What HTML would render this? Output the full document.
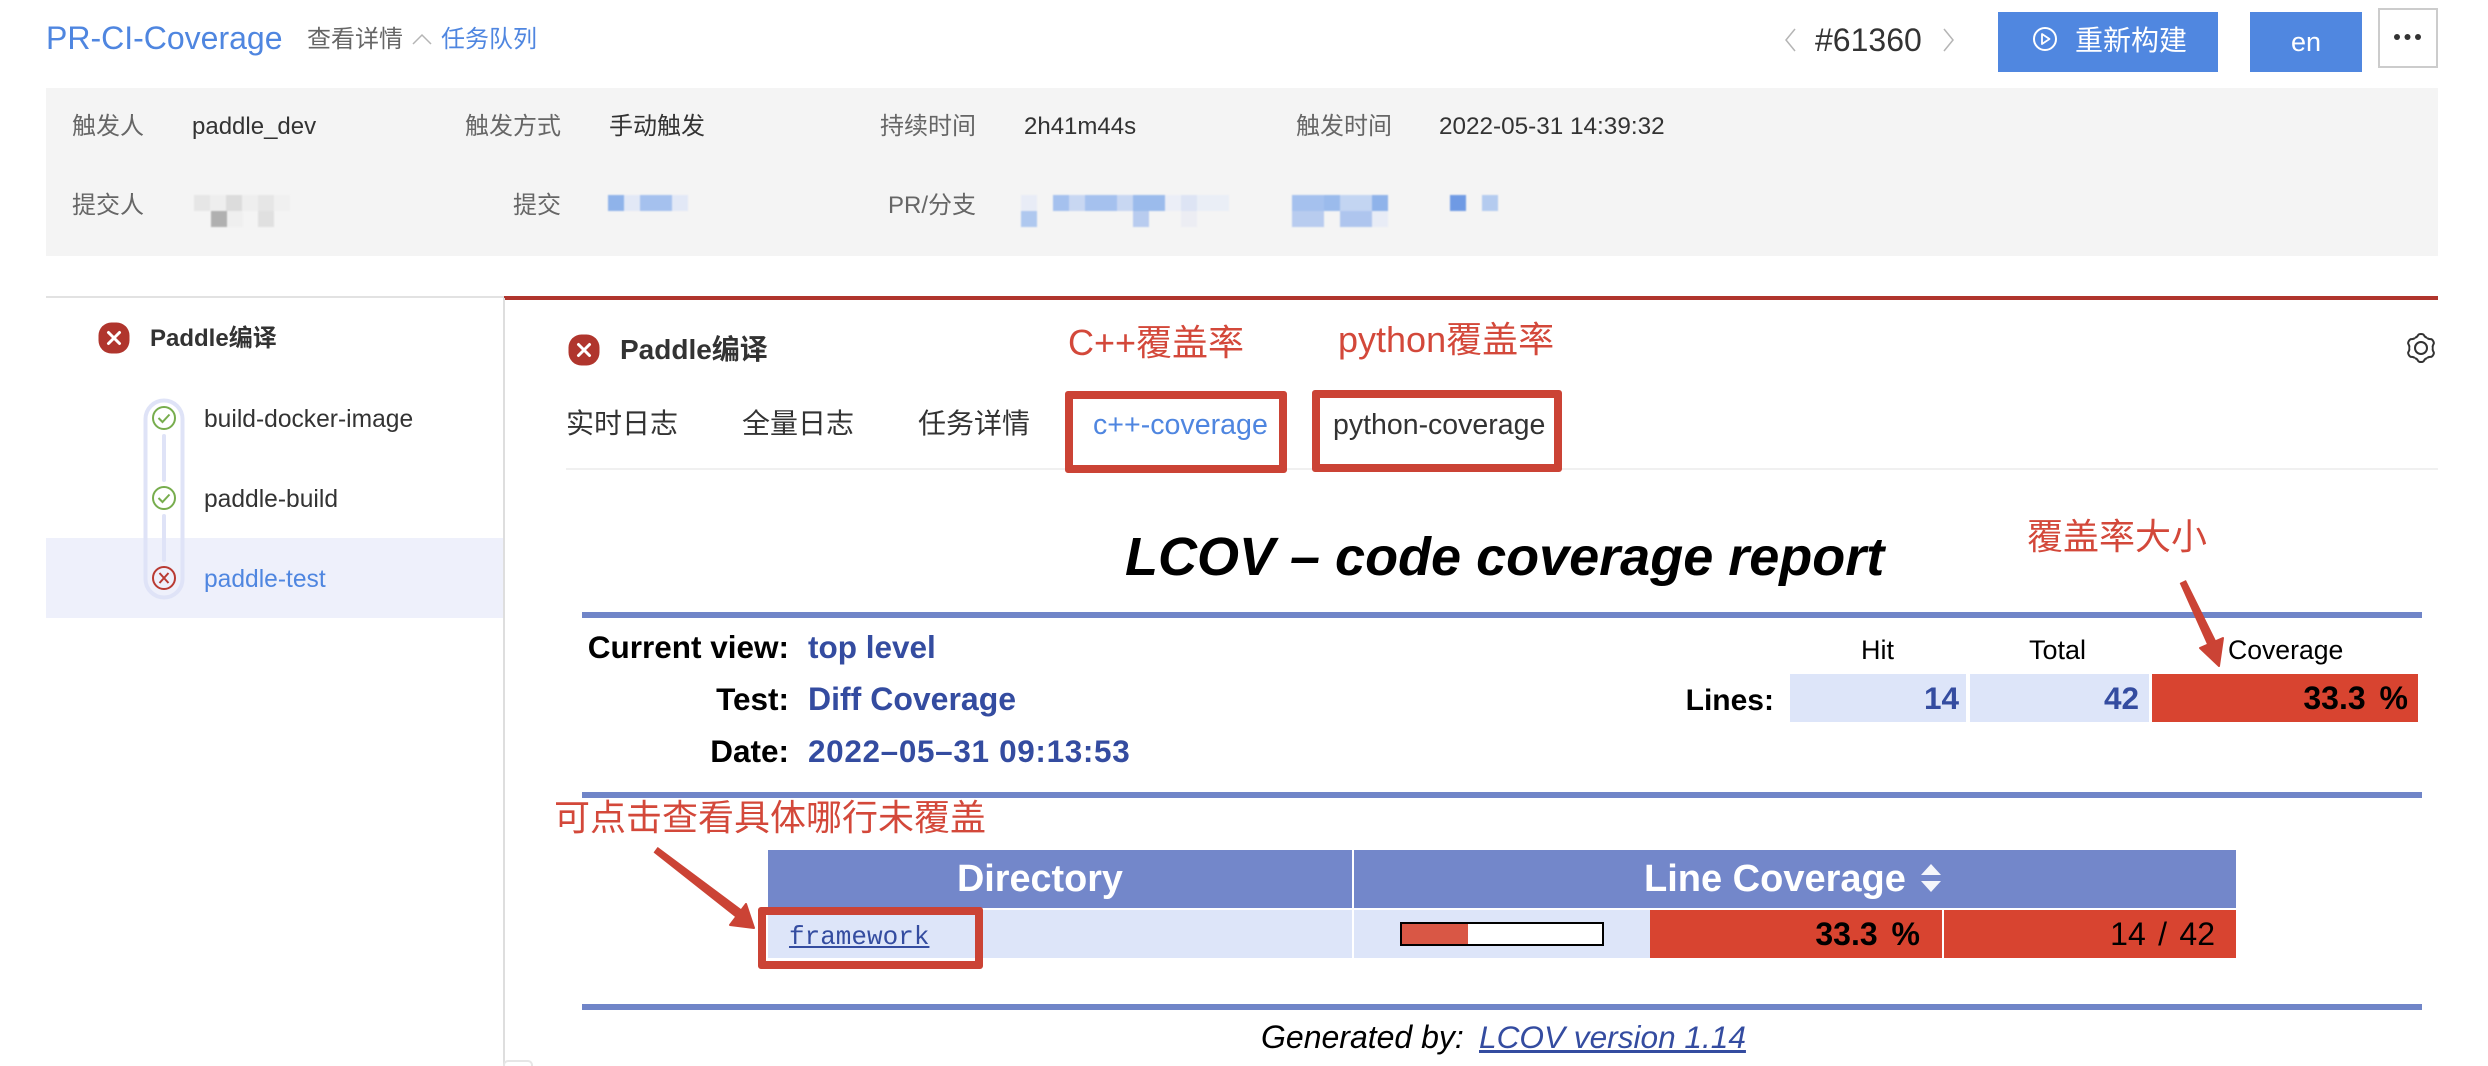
<!DOCTYPE html>
<html lang="zh"><head><meta charset="utf-8"><title>PR-CI-Coverage</title>
<style>
html,body{margin:0;padding:0;background:#fff}
#p{position:relative;width:2488px;height:1066px;overflow:hidden;background:#fff;font-family:"Liberation Sans","Noto Sans CJK SC",sans-serif;color:#333}
.t{position:absolute;white-space:nowrap;line-height:40px;height:40px}
.r{position:absolute}
.g{color:#666;font-size:24px}
.d{color:#333;font-size:24px}
.a{color:#d3483a;font-size:36px;line-height:50px;height:50px}
.b{font-weight:bold;color:#000;font-size:31.5px;line-height:44px;height:44px}
.v{font-weight:bold;color:#344ca0;font-size:31.5px;line-height:44px;height:44px}
.box{position:absolute;border:8px solid #cb4335;border-radius:3px;box-sizing:border-box}
</style></head><body><div id="p">
<div class="t" style="left:46px;top:18px;font-size:32px;color:#4f86e0">PR-CI-Coverage</div>
<div class="t" style="left:307px;top:20px;font-size:24px;color:#666">查看详情</div>
<svg class="r" style="left:411px;top:32px" width="22" height="14"><path d="M2 12 L11 3 L20 12" fill="none" stroke="#b5b5b5" stroke-width="1.5"/></svg>
<div class="t" style="left:441px;top:20px;font-size:24px;color:#4f86e0">任务队列</div>
<svg class="r" style="left:1783px;top:27px" width="14" height="26"><path d="M12 2 L3 13 L12 24" fill="none" stroke="#b5b5b5" stroke-width="1.5"/></svg>
<div class="t" style="left:1815px;top:20px;font-size:32px;color:#333">#61360</div>
<svg class="r" style="left:1942px;top:27px" width="14" height="26"><path d="M2 2 L11 13 L2 24" fill="none" stroke="#b5b5b5" stroke-width="1.5"/></svg>
<div class="r" style="left:1998px;top:12px;width:220px;height:60px;background:#5087e0"></div>
<svg class="r" style="left:2032px;top:26px" width="26" height="26"><circle cx="13" cy="13" r="11" fill="none" stroke="#fff" stroke-width="2"/><path d="M10 8 L17.5 13 L10 18 Z" fill="none" stroke="#fff" stroke-width="1.8" stroke-linejoin="round"/></svg>
<div class="t" style="left:2075px;top:21px;font-size:28px;color:#fff">重新构建</div>
<div class="r" style="left:2250px;top:12px;width:112px;height:60px;background:#5087e0"></div>
<div class="t" style="left:2250px;width:112px;text-align:center;top:22px;font-size:27px;color:#fff">en</div>
<div class="r" style="left:2378px;top:8px;width:60px;height:60px;box-sizing:border-box;border:2px solid #ccc;background:#fff"></div>
<svg class="r" style="left:2390px;top:30px" width="36" height="14" fill="#333"><circle cx="7" cy="7" r="3"/><circle cx="17.5" cy="7" r="3"/><circle cx="28" cy="7" r="3"/></svg>

<div class="r" style="left:46px;top:88px;width:2392px;height:168px;background:#f4f4f4"></div>
<div class="t g" style="left:72px;top:107px">触发人</div>
<div class="t d" style="left:192px;top:107px">paddle_dev</div>
<div class="t g" style="left:465px;top:107px">触发方式</div>
<div class="t d" style="left:609px;top:107px">手动触发</div>
<div class="t g" style="left:880px;top:107px">持续时间</div>
<div class="t d" style="left:1024px;top:107px">2h41m44s</div>
<div class="t g" style="left:1296px;top:107px">触发时间</div>
<div class="t d" style="left:1439px;top:107px;font-size:24.3px">2022-05-31 14:39:32</div>
<div class="t g" style="left:72px;top:186px">提交人</div>
<div class="t g" style="left:513px;top:186px">提交</div>
<div class="t g" style="left:888px;top:186px">PR/分支</div>
<svg class="r" style="left:0;top:190px;filter:blur(.8px)" width="1520" height="45">
<g transform="translate(0,5)">
<rect x="194" y="0" width="16" height="16" fill="#e6e6e6"/><rect x="210" y="0" width="16" height="16" fill="#eeeeee"/><rect x="226" y="0" width="16" height="16" fill="#dcdcdc"/><rect x="242" y="0" width="16" height="16" fill="#eeeeee"/><rect x="258" y="0" width="16" height="16" fill="#e6e6e6"/><rect x="274" y="0" width="16" height="16" fill="#f0f0f0"/>
<rect x="211" y="16" width="16" height="16" fill="#b0b0b0"/><rect x="227" y="16" width="16" height="16" fill="#efefef"/><rect x="258" y="16" width="16" height="16" fill="#e0e0e0"/>
<rect x="608" y="0" width="16" height="16" fill="#8fb3ea"/><rect x="624" y="0" width="16" height="16" fill="#e2e8f6"/><rect x="640" y="0" width="32" height="16" fill="#a5c1ee"/><rect x="672" y="0" width="16" height="16" fill="#e2e8f6"/>
<rect x="1021" y="0" width="16" height="16" fill="#e8ecf6"/><rect x="1053" y="0" width="16" height="16" fill="#a5c1ee"/><rect x="1069" y="0" width="16" height="16" fill="#c8d7f2"/><rect x="1085" y="0" width="32" height="16" fill="#a5c1ee"/><rect x="1117" y="0" width="16" height="16" fill="#c8d7f2"/><rect x="1133" y="0" width="32" height="16" fill="#9bbbec"/><rect x="1165" y="0" width="16" height="16" fill="#ebeef7"/><rect x="1181" y="0" width="16" height="16" fill="#dde4f4"/><rect x="1197" y="0" width="32" height="16" fill="#eaeef6"/>
<rect x="1021" y="16" width="16" height="16" fill="#afc8ef"/><rect x="1133" y="16" width="16" height="16" fill="#b8ccef"/><rect x="1181" y="16" width="16" height="16" fill="#ecedf3"/>
<rect x="1292" y="0" width="32" height="16" fill="#a5c1ee"/><rect x="1324" y="0" width="16" height="16" fill="#9bbbec"/><rect x="1340" y="0" width="32" height="16" fill="#c3d5f2"/><rect x="1372" y="0" width="16" height="16" fill="#8fb3ea"/>
<rect x="1292" y="16" width="32" height="16" fill="#b8ccef"/><rect x="1340" y="16" width="32" height="16" fill="#aec5ee"/><rect x="1372" y="16" width="16" height="16" fill="#e8ecf6"/>
<rect x="1450" y="0" width="16" height="16" fill="#6f9ae4"/><rect x="1482" y="0" width="16" height="16" fill="#b4cbef"/>
</g></svg>

<div class="r" style="left:46px;top:296px;width:458px;height:2px;background:#e2e2e2"></div>
<div class="r" style="left:504px;top:296px;width:1934px;height:4px;background:#b0352d"></div>
<div class="r" style="left:503px;top:298px;width:2px;height:768px;background:#dedede"></div>
<div class="r" style="left:46px;top:538px;width:457px;height:80px;background:#eef0fb"></div>
<svg class="r" style="left:98px;top:322px" width="32" height="32"><rect x="0.5" y="0.5" width="31" height="31" rx="13" fill="#b0352d"/><path d="M10.5 10.5 L21.5 21.5 M21.5 10.5 L10.5 21.5" stroke="#fff" stroke-width="3" stroke-linecap="round"/></svg>
<div class="t" style="left:150px;top:319px;font-size:24px;font-weight:bold;color:#333">Paddle编译</div>
<svg class="r" style="left:140px;top:395px" width="50" height="210">
<rect x="5.5" y="5.5" width="37" height="197" rx="18.5" fill="none" stroke="#dfe3f7" stroke-width="4"/>
<rect x="22" y="39" width="4" height="48" rx="2" fill="#dfe3f7"/><rect x="22" y="119" width="4" height="48" rx="2" fill="#dfe3f7"/>
<circle cx="24" cy="23" r="11" fill="none" stroke="#77ad4d" stroke-width="2"/><path d="M18.5 23 L22.5 27 L29.5 19.5" fill="none" stroke="#77ad4d" stroke-width="2"/>
<circle cx="24" cy="103" r="11" fill="none" stroke="#77ad4d" stroke-width="2"/><path d="M18.5 103 L22.5 107 L29.5 99.5" fill="none" stroke="#77ad4d" stroke-width="2"/>
<circle cx="24" cy="183" r="11" fill="none" stroke="#b93a32" stroke-width="2"/><path d="M19.5 178 L28.5 188 M28.5 178 L19.5 188" fill="none" stroke="#b93a32" stroke-width="2"/>
</svg>
<div class="t" style="left:204px;top:400px;font-size:24.6px;color:#333">build-docker-image</div>
<div class="t" style="left:204px;top:480px;font-size:24.6px;color:#333">paddle-build</div>
<div class="t" style="left:204px;top:560px;font-size:24.6px;color:#4f86e0">paddle-test</div>

<svg class="r" style="left:568px;top:334px" width="32" height="32"><rect x="0.5" y="0.5" width="31" height="31" rx="13" fill="#b0352d"/><path d="M10.5 10.5 L21.5 21.5 M21.5 10.5 L10.5 21.5" stroke="#fff" stroke-width="3" stroke-linecap="round"/></svg>
<div class="t" style="left:620px;top:330px;font-size:28px;font-weight:bold;color:#333">Paddle编译</div>
<svg class="r" style="left:2405px;top:332px" width="32" height="32" viewBox="0 0 32 32"><g fill="none" stroke="#333" stroke-width="2" stroke-linejoin="round"><path d="M10 5.6 C12 5.6 12.6 4 13.2 3 C14 1.6 18 1.6 18.8 3 C19.4 4 20 5.6 22 5.6"/><path transform="rotate(60 16 16)" d="M10 5.6 C12 5.6 12.6 4 13.2 3 C14 1.6 18 1.6 18.8 3 C19.4 4 20 5.6 22 5.6"/><path transform="rotate(120 16 16)" d="M10 5.6 C12 5.6 12.6 4 13.2 3 C14 1.6 18 1.6 18.8 3 C19.4 4 20 5.6 22 5.6"/><path transform="rotate(180 16 16)" d="M10 5.6 C12 5.6 12.6 4 13.2 3 C14 1.6 18 1.6 18.8 3 C19.4 4 20 5.6 22 5.6"/><path transform="rotate(240 16 16)" d="M10 5.6 C12 5.6 12.6 4 13.2 3 C14 1.6 18 1.6 18.8 3 C19.4 4 20 5.6 22 5.6"/><path transform="rotate(300 16 16)" d="M10 5.6 C12 5.6 12.6 4 13.2 3 C14 1.6 18 1.6 18.8 3 C19.4 4 20 5.6 22 5.6"/><circle cx="16" cy="16" r="6"/></g></svg>

<div class="t" style="left:566px;top:404px;font-size:28px;color:#333">实时日志</div>
<div class="t" style="left:742px;top:404px;font-size:28px;color:#333">全量日志</div>
<div class="t" style="left:918px;top:404px;font-size:28px;color:#333">任务详情</div>
<div class="t" style="left:1093px;top:405px;font-size:28.6px;color:#4f86e0">c++-coverage</div>
<div class="t" style="left:1333px;top:405px;font-size:28.5px;color:#333">python-coverage</div>
<div class="r" style="left:566px;top:468px;width:1872px;height:2px;background:#f0f0f0"></div>

<div class="t" style="left:1125px;top:527px;height:60px;line-height:60px;font-size:54px;font-weight:bold;font-style:italic;color:#000">LCOV – code coverage report</div>
<div class="r" style="left:582px;top:612px;width:1840px;height:6px;background:#7085c8"></div>
<div class="r" style="left:582px;top:792px;width:1840px;height:6px;background:#7085c8"></div>
<div class="r" style="left:582px;top:1004px;width:1840px;height:6px;background:#7085c8"></div>

<div class="t b" style="right:1699px;top:625px">Current view:</div>
<div class="t v" style="left:808px;top:625px">top level</div>
<div class="t b" style="right:1699px;top:677px">Test:</div>
<div class="t v" style="left:808px;top:677px;font-size:32px">Diff Coverage</div>
<div class="t b" style="right:1699px;top:729px">Date:</div>
<div class="t v" style="left:808px;top:729px;letter-spacing:.65px">2022–05–31 09:13:53</div>

<div class="t" style="left:1861px;top:630px;font-size:27px;color:#000">Hit</div>
<div class="t" style="left:2029px;top:630px;font-size:27px;color:#000">Total</div>
<div class="t" style="left:2228px;top:630px;font-size:26.6px;color:#000">Coverage</div>
<div class="t b" style="right:714px;top:679px;font-size:30px">Lines:</div>
<div class="r" style="left:1790px;top:674px;width:176px;height:48px;background:#dde5f9"></div>
<div class="r" style="left:1970px;top:674px;width:179px;height:48px;background:#dde5f9"></div>
<div class="r" style="left:2152px;top:674px;width:266px;height:48px;background:#d84430"></div>
<div class="t v" style="right:529px;top:676px">14</div>
<div class="t v" style="right:349px;top:676px">42</div>
<div class="t b" style="right:80px;top:676px;font-size:32px;word-spacing:5px">33.3 %</div>

<div class="r" style="left:768px;top:850px;width:584px;height:58px;background:#7387ca"></div>
<div class="r" style="left:1354px;top:850px;width:882px;height:58px;background:#7387ca"></div>
<div class="t" style="left:957px;top:857px;height:44px;line-height:44px;font-size:37.8px;font-weight:bold;color:#fff">Directory</div>
<div class="t" style="left:1644px;top:857px;height:44px;line-height:44px;font-size:38px;font-weight:bold;color:#fff">Line Coverage</div>
<svg class="r" style="left:1919px;top:862px" width="24" height="32"><path d="M12 2 L22 13 L2 13 Z M2 19 L22 19 L12 30 Z" fill="#fff" opacity=".92"/></svg>
<div class="r" style="left:768px;top:910px;width:584px;height:48px;background:#dde5f9"></div>
<div class="r" style="left:1354px;top:910px;width:296px;height:48px;background:#dde5f9"></div>
<div class="r" style="left:1650px;top:910px;width:292px;height:48px;background:#d84430"></div>
<div class="r" style="left:1944px;top:910px;width:292px;height:48px;background:#d84430"></div>
<div class="t" style="left:789px;top:917px;font-family:'Liberation Mono',monospace;font-size:26px;color:#344ca0;text-decoration:underline">framework</div>
<div class="r" style="left:1400px;top:922px;width:204px;height:24px;box-sizing:border-box;border:2px solid #000;background:#fff"><div style="width:66px;height:20px;background:#d95745"></div></div>
<div class="t b" style="right:568px;top:912px;font-size:32px;word-spacing:5px">33.3 %</div>
<div class="t" style="right:273px;top:912px;height:44px;line-height:44px;font-size:32px;color:#000;word-spacing:3.5px">14 / 42</div>

<div class="t" style="left:1261px;top:1017px;font-size:32px;font-style:italic;color:#000">Generated by:</div>
<div class="t" style="left:1479px;top:1017px;font-size:31.6px;font-style:italic;color:#344ca0;text-decoration:underline">LCOV version 1.14</div>
<div class="r" style="left:503px;top:1060px;width:30px;height:10px;box-sizing:border-box;border:2px solid #e6e6e6;border-radius:5px;background:#fff"></div>

<div class="box" style="left:1065px;top:391px;width:222px;height:82px"></div>
<div class="box" style="left:1312px;top:390px;width:250px;height:82px"></div>
<div class="box" style="left:758px;top:907px;width:225px;height:62px"></div>
<div class="t a" style="left:1068px;top:318px">C++覆盖率</div>
<div class="t a" style="left:1338px;top:315px">python覆盖率</div>
<div class="t a" style="left:2027px;top:512px">覆盖率大小</div>
<div class="t a" style="left:554px;top:793px">可点击查看具体哪行未覆盖</div>
<svg class="r" style="left:0;top:0;pointer-events:none" width="2488" height="1066">
<path d="M2185.7 580.7 L2219 648 L2211 652 L2180.3 583.3 Z" fill="#cb4335" stroke="#cb4335" stroke-width="1" stroke-linejoin="round"/>
<path d="M2200 648 L2219 666 L2223 638 Z" fill="#cb4335" stroke="#cb4335" stroke-width="2" stroke-linejoin="round"/>
<path d="M657.8 847.6 L744.7 912.4 L739.3 919.6 L654.2 852.4 Z" fill="#cb4335" stroke="#cb4335" stroke-width="1" stroke-linejoin="round"/>
<path d="M730 925 L754 928 L746 904 Z" fill="#cb4335" stroke="#cb4335" stroke-width="2" stroke-linejoin="round"/>
</svg>
</div></body></html>
